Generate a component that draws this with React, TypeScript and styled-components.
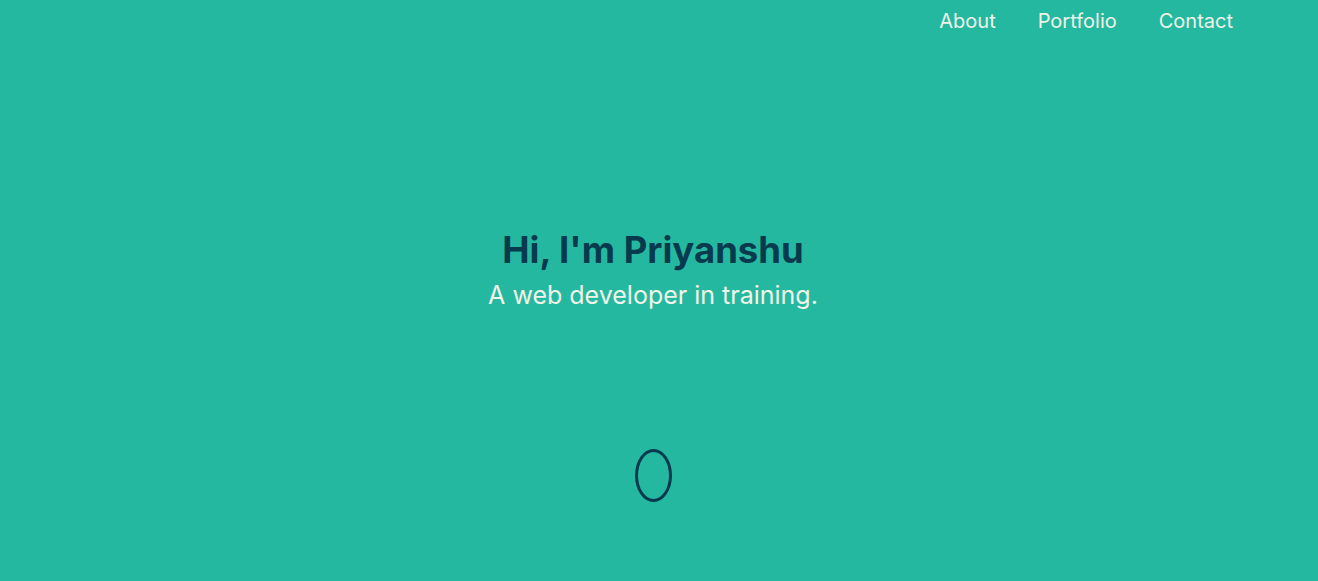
import React from "react";
import styled, { createGlobalStyle } from "styled-components";

const GlobalStyle = createGlobalStyle`
  html, body {
    margin: 0;
    padding: 0;
    background: #25b8a1;
  }
  * { box-sizing: border-box; }
`;

const Page = styled.div`
  width: 100%;
  height: 581px;
  background: #25b8a1;
  font-family: Inter, "Noto Sans", sans-serif;
  display: flex;
  flex-direction: column;
  overflow: hidden;
`;

const Nav = styled.nav`
  display: flex;
  justify-content: flex-end;
  gap: 42px;
  padding: 10px 85px 0 0;
  height: 42px;
`;

const NavLink = styled.a`
  color: #eef3e6;
  font-size: 20px;
  line-height: 23px;
  text-decoration: none;
  cursor: pointer;
`;

const Hero = styled.main`
  flex: 1;
  display: flex;
  flex-direction: column;
  align-items: center;
  padding-right: 12px;
`;

const Heading = styled.h1`
  margin: 186px 0 0;
  color: #063a4c;
  font-size: 36.5px;
  line-height: 44px;
  font-weight: 700;
`;

const Subtitle = styled.p`
  margin: 6px 0 0;
  color: #f1f4e7;
  font-size: 25px;
  line-height: 34px;
  font-weight: 400;
`;

const ScrollMouse = styled.div`
  margin-top: 137px;
  width: 37px;
  height: 53px;
  border: 3px solid #063a4c;
  border-radius: 50%;
`;

export default function App() {
  return (
    <>
      <GlobalStyle />
      <Page>
        <Nav>
          <NavLink>About</NavLink>
          <NavLink>Portfolio</NavLink>
          <NavLink>Contact</NavLink>
        </Nav>
        <Hero>
          <Heading>Hi, I'm Priyanshu</Heading>
          <Subtitle>A web developer in training.</Subtitle>
          <ScrollMouse />
        </Hero>
      </Page>
    </>
  );
}
